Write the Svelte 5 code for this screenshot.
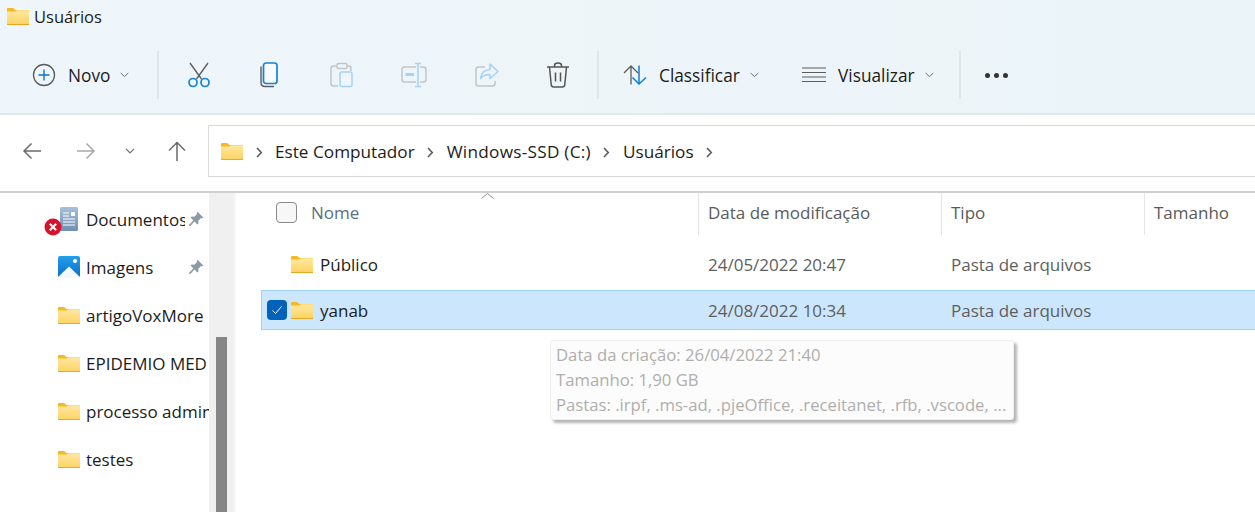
<script>
  const sidebar = [
    { name: 'Documentos', icon: 'doc', pin: true },
    { name: 'Imagens', icon: 'img', pin: true },
    { name: 'artigoVoxMore', icon: 'folder' },
    { name: 'EPIDEMIO MED', icon: 'folder' },
    { name: 'processo admin', icon: 'folder' },
    { name: 'testes', icon: 'folder' }
  ]
  const files = [
    { name: 'Público', date: '24/05/2022 20:47', type: 'Pasta de arquivos' },
    { name: 'yanab', date: '24/08/2022 10:34', type: 'Pasta de arquivos', selected: true }
  ]
  const crumbs = ['Este Computador', 'Windows-SSD (C:)', 'Usuários']
</script>

{#snippet folder(w = 22, h = 17)}
  <svg class="folder" width={w} height={h} viewBox="0 0 22 17">
    <defs>
      <linearGradient id="fg" x1="0" y1="0" x2="0" y2="1">
        <stop offset="0" stop-color="#ffe9a0" />
        <stop offset="1" stop-color="#fdd262" />
      </linearGradient>
    </defs>
    <path d="M0 1.2C0 .5.5 0 1.2 0h5l2.2 2H22v3H0z" fill="#f9b81f" />
    <path d="M0 3.4h8.5L10 2.2h12V17H0z" fill="url(#fg)" />
    <rect x="0" y="16" width="22" height="1" fill="#e9a824" />
  </svg>
{/snippet}

{#snippet pin()}
  <svg class="pin" width="16" height="16" viewBox="0 0 16 16">
    <path d="M9.6 .8l5.6 5.6-1.2 1-1-.4-2.7 2.7.2 2.6-1.1 1.1-2.8-2.8L2 15.2 .8 14l4.600-4.600-2.800-2.800 1.100-1.100 2.600.2 2.700-2.700-.4-1z" fill="#8d9aa5" />
  </svg>
{/snippet}

{#snippet caret()}
  <svg class="caret" width="9" height="6" viewBox="0 0 9 6"><path d="M.7 1l3.800 3.600L8.300 1" fill="none" stroke="#6d6d6d" stroke-width="1" /></svg>
{/snippet}

<div class="window">
  <header class="ribbon">
    <div class="title">
      {@render folder()}
      <span>Usuários</span>
    </div>
    <div class="tools">
      <button class="tool novo">
        <svg width="24" height="24" viewBox="0 0 24 24">
          <circle cx="12" cy="12" r="10.500" fill="none" stroke="#5a5a5a" stroke-width="1.300" />
          <path d="M12 6.500v11M6.500 12h11" stroke="#0a74cf" stroke-width="1.400" />
        </svg>
        <span>Novo</span>
        {@render caret()}
      </button>
      <i class="sep"></i>
      <div class="icons">
        <svg width="24" height="26" viewBox="0 0 24 26">
          <path d="M3 1l11.500 16M21 1L9.500 17" stroke="#5c5c5c" stroke-width="1.300" fill="none" />
          <circle cx="6" cy="20.500" r="4" fill="none" stroke="#1283d8" stroke-width="1.700" />
          <circle cx="18" cy="20.500" r="4" fill="none" stroke="#1283d8" stroke-width="1.700" />
        </svg>
        <svg width="24" height="26" viewBox="0 0 24 26">
          <path d="M3 4.500v16c0 2.500 1.500 4 4 4h9" fill="none" stroke="#5c5c5c" stroke-width="1.400" />
          <rect x="5.500" y="1" width="13.500" height="20.500" rx="2.500" fill="#f7f9fb" stroke="#1283d8" stroke-width="1.700" />
        </svg>
        <svg width="24" height="26" viewBox="0 0 24 26">
          <path d="M7 4H3.500C2 4 1 5 1 6.500v15C1 23 2 24 3.500 24H8" fill="none" stroke="#c2c5c7" stroke-width="1.500" />
          <path d="M17 4h1.500C20 4 21 5 21 6.500V9" fill="none" stroke="#c2c5c7" stroke-width="1.500" />
          <rect x="7" y="1.500" width="10" height="5" rx="1.500" fill="none" stroke="#c2c5c7" stroke-width="1.500" />
          <rect x="10" y="10" width="12" height="14.500" rx="2" fill="#eef5fb" stroke="#a5d2f4" stroke-width="1.500" />
        </svg>
        <svg width="26" height="26" viewBox="0 0 26 26">
          <path d="M15 5H3.500C2 5 1 6 1 7.500v10C1 19 2 20 3.500 20H15M19 5h3c1.500 0 3 1 3 2.500v10c0 1.500-1.500 2.500-3 2.500h-3" fill="none" stroke="#c2c5c7" stroke-width="1.500" />
          <path d="M17 2v22M14 1.500h6M14 24.500h6" stroke="#a5d2f4" stroke-width="1.500" fill="none" />
          <path d="M4.500 12.500h8.500" stroke="#a5d2f4" stroke-width="3" />
        </svg>
        <svg width="24" height="24" viewBox="0 0 24 24">
          <path d="M10 4H3.500C2 4 1 5 1 6.500v14C1 22 2 23 3.500 23h14c1.500 0 2.500-1 2.500-2.500V18" fill="none" stroke="#c2c5c7" stroke-width="1.500" />
          <path d="M15 1l8 7.500-8 7v-4c-4.500 0-7 1-9.500 4 .5-5 3.500-8.500 9.500-9z" fill="none" stroke="#a5d2f4" stroke-width="1.500" stroke-linejoin="round" />
        </svg>
        <svg width="24" height="26" viewBox="0 0 24 26">
          <path d="M1 5h22M8.500 5V3.500C8.500 2 10 1 12 1s3.500 1 3.500 2.500V5" fill="none" stroke="#555" stroke-width="1.500" />
          <path d="M3.500 5l1.700 17.500c.1 1.500 1.200 2.500 2.600 2.500h8.400c1.400 0 2.500-1 2.600-2.500L20.500 5" fill="none" stroke="#555" stroke-width="1.500" />
          <path d="M9.500 10.500v9M14.500 10.500v9" stroke="#555" stroke-width="1.500" />
        </svg>
      </div>
      <i class="sep"></i>
      <button class="tool sort">
        <svg width="24" height="20" viewBox="0 0 24 20">
          <path d="M8 19.500V1M1 8l7-7 7 7" fill="none" stroke="#5c5c5c" stroke-width="1.300" />
          <path d="M16 .5V19M9.500 12.500L16 19l7-6.500" fill="none" stroke="#0f7fd6" stroke-width="1.500" />
        </svg>
        <span>Classificar</span>
        {@render caret()}
      </button>
      <button class="tool view">
        <svg width="24" height="16" viewBox="0 0 24 16">
          <path d="M0 1h24M0 5.500h24M0 10h24M0 14.500h24" stroke="#5c5c5c" stroke-width="1.200" />
        </svg>
        <span>Visualizar</span>
        {@render caret()}
      </button>
      <i class="sep"></i>
      <div class="dots"><b></b><b></b><b></b></div>
    </div>
  </header>

  <nav class="navbar">
    <div class="arrows">
      <svg width="20" height="18" viewBox="0 0 20 18"><path d="M19 9H2M9.500 1.500L2 9l7.500 7.500" fill="none" stroke="#6a6a6a" stroke-width="1.500" /></svg>
      <svg width="20" height="18" viewBox="0 0 20 18"><path d="M1 9h17M10.500 1.500L18 9l-7.500 7.500" fill="none" stroke="#a9a9a9" stroke-width="1.500" /></svg>
      <svg width="10" height="6" viewBox="0 0 10 6"><path d="M1 .8l4 4 4-4" fill="none" stroke="#707070" stroke-width="1.200" /></svg>
      <svg width="20" height="20" viewBox="0 0 20 20"><path d="M10 20V2M2 9.500L10 1.500l8 8" fill="none" stroke="#6a6a6a" stroke-width="1.500" /></svg>
    </div>
    <div class="address">
      {@render folder()}
      {#each crumbs as c}
        <svg class="chev" width="7" height="11" viewBox="0 0 7 11"><path d="M1 1l4.300 4.500L1 10" fill="none" stroke="#555" stroke-width="1.500" /></svg>
        <span>{c}</span>
      {/each}
      <svg class="chev" width="7" height="11" viewBox="0 0 7 11"><path d="M1 1l4.300 4.500L1 10" fill="none" stroke="#555" stroke-width="1.500" /></svg>
    </div>
  </nav>

  <main class="body">
    <aside class="side">
      <ul>
        {#each sidebar as it}
          <li>
            <span class="ico">
              {#if it.icon === 'doc'}
                <svg class="doc" width="18" height="24" viewBox="0 0 18 24">
                  <defs>
                    <linearGradient id="dg" x1="0" y1="0" x2="0" y2="1">
                      <stop offset="0" stop-color="#a8bfd8" />
                      <stop offset="1" stop-color="#6f8fb2" />
                    </linearGradient>
                  </defs>
                  <rect width="18" height="24" rx="1.500" fill="url(#dg)" />
                  <path d="M3 6h6M3 9h6M3 12h12M3 15h12M3 18h12" stroke="#fff" stroke-width="1" />
                  <rect x="11" y="5" width="4" height="4" fill="#fff" />
                </svg>
                <span class="err">
                  <svg width="18" height="18" viewBox="0 0 18 18">
                    <circle cx="9" cy="9" r="8.500" fill="#d9122c" />
                    <path d="M5.800 5.800l6.400 6.400M12.200 5.800l-6.400 6.400" stroke="#fff" stroke-width="2" />
                  </svg>
                </span>
              {:else if it.icon === 'img'}
                <svg width="22" height="22" viewBox="0 0 22 22">
                  <defs>
                    <linearGradient id="ig" x1="0" y1="0" x2="0" y2="1">
                      <stop offset="0" stop-color="#22a0ec" />
                      <stop offset="1" stop-color="#0a6cc4" />
                    </linearGradient>
                  </defs>
                  <rect width="22" height="22" rx="2" fill="url(#ig)" />
                  <circle cx="17" cy="5" r="2" fill="#fff" />
                  <path d="M0 21L11 10.500 22 21v1H0z" fill="#f4f8fc" />
                </svg>
              {:else}
                {@render folder()}
              {/if}
            </span>
            <span class="label" class:short={it.pin}>{it.name}</span>
            {#if it.pin}{@render pin()}{/if}
          </li>
        {/each}
      </ul>
    </aside>
    <div class="track"><div class="thumb"></div></div>
    <section class="list">
      <svg class="sortmark" width="13" height="6" viewBox="0 0 13 6"><path d="M.5 5.500l6-5 6 5" fill="none" stroke="#8c8c8c" /></svg>
      <div class="head">
        <div class="c-name">
          <span class="check"></span>
          <span>Nome</span>
        </div>
        <div class="c-date">Data de modificação</div>
        <div class="c-type">Tipo</div>
        <div class="c-size">Tamanho</div>
      </div>
      {#each files as f}
        <div class="row" class:selected={f.selected}>
          <div class="c-name">
            {#if f.selected}
              <span class="tick">
                <svg width="12" height="10" viewBox="0 0 12 10"><path d="M1.500 5.500l3 3 6-7" fill="none" stroke="#fff" stroke-width="1" /></svg>
              </span>
            {/if}
            {@render folder()}
            <span class="fname">{f.name}</span>
          </div>
          <div class="c-date muted">{f.date}</div>
          <div class="c-type muted">{f.type}</div>
        </div>
      {/each}
      <div class="tooltip">
        <div>Data da criação: 26/04/2022 21:40</div>
        <div>Tamanho: 1,90 GB</div>
        <div>Pastas: .irpf, .ms-ad, .pjeOffice, .receitanet, .rfb, .vscode, ...</div>
      </div>
    </section>
  </main>
</div>

<style>
  :global(body) {
    margin: 0;
    background: #fff;
  }
  .window {
    width: 1255px;
    height: 512px;
    overflow: hidden;
    font-family: "Open Sans", "Noto Sans", sans-serif;
    font-size: 17px;
    color: #1c1c1c;
    display: flex;
    flex-direction: column;
  }
  .ribbon {
    height: 113px;
    flex: none;
    background: linear-gradient(90deg, #eff6fb, #ebf4f8);
    border-bottom: 2px solid #e0e8ec;
  }
  .title {
    display: flex;
    align-items: center;
    gap: 5px;
    height: 18px;
    padding: 7px 0 0 7px;
    font-size: 16.500px;
  }
  .tools {
    display: flex;
    align-items: center;
    height: 48px;
    margin-top: 26px;
  }
  .tool {
    display: flex;
    align-items: center;
    border: 0;
    background: none;
    padding: 0;
    font: inherit;
    color: inherit;
    flex: none;
    box-sizing: border-box;
    gap: 12px;
  }
  .novo {
    width: 157px;
    padding-left: 32px;
  }
  .novo span { font-size: 17.800px; }
  .sep {
    width: 2px;
    height: 48px;
    background: #dfe5e9;
    flex: none;
  }
  .icons {
    width: 438px;
    flex: none;
    box-sizing: border-box;
    padding: 0 27px 0 28px;
    display: flex;
    align-items: center;
    justify-content: space-between;
  }
  .sort {
    width: 178px;
    padding-left: 24px;
  }
  .view {
    width: 182px;
    padding-left: 25px;
  }
  .tool span { font-size: 17.300px; }
  .tool .caret { margin-left: -2px; }
  .dots {
    display: flex;
    gap: 4px;
    margin-left: 24px;
  }
  .dots b {
    width: 5px;
    height: 5px;
    border-radius: 50%;
    background: #333;
  }
  .navbar {
    height: 78px;
    flex: none;
    box-sizing: border-box;
    border-bottom: 2px solid #cfcfcf;
    padding: 10px 0 0 22px;
    display: flex;
    align-items: flex-start;
  }
  .arrows {
    width: 186px;
    height: 52px;
    display: flex;
    align-items: center;
    gap: 34px;
  }
  .arrows svg:nth-child(3) { margin: 0 0 0 -5px; }
  .arrows svg:nth-child(4) { margin-left: -2px; }
  .address {
    flex: 1;
    height: 52px;
    box-sizing: border-box;
    border: 1px solid #d9d9d9;
    border-right: 0;
    padding: 1px 0 0 12px;
    display: flex;
    align-items: center;
    gap: 12.500px;
    font-size: 17.200px;
  }
  .address span:nth-of-type(2) { letter-spacing: .27px; }
  .chev { margin-top: 2px; }
  .body {
    flex: 1;
    display: flex;
    min-height: 0;
  }
  .side {
    width: 209px;
    flex: none;
    overflow: hidden;
  }
  ul {
    list-style: none;
    margin: 0;
    padding: 2px 0 0 58px;
  }
  li {
    height: 48px;
    display: flex;
    align-items: center;
    white-space: nowrap;
    font-size: 17px;
  }
  .ico {
    width: 28px;
    display: flex;
    position: relative;
    flex: none;
  }
  .ico :global(svg) { display: block; }
  .doc { margin-left: 2px; }
  .err {
    position: absolute;
    left: -14px;
    top: 11px;
  }
  .label.short {
    width: 99px;
    overflow: hidden;
  }
  .pin { flex: none; margin: -1px 0 0 3px; }
  .track {
    width: 25px;
    flex: none;
    background: #f0f0f0;
    border-right: 2px solid #f7f7f7;
    overflow: hidden;
  }
  .thumb {
    width: 11px;
    height: 200px;
    margin: 144px 0 0 7px;
    background: #868686;
  }
  .list {
    flex: 1;
    position: relative;
    padding-left: 25px;
    font-size: 17px;
  }
  .sortmark {
    position: absolute;
    left: 245px;
    top: 0;
  }
  .head {
    display: flex;
    height: 42px;
    color: #5a5a5a;
  }
  .head > div {
    display: flex;
    align-items: center;
    padding-bottom: 4px;
    box-sizing: border-box;
  }
  .head .c-name {
    padding-left: 15px;
    gap: 14px;
    color: #5b6f85;
    border-right: 1px solid #e5e5e5;
  }
  .head .c-date, .head .c-type { border-right: 1px solid #e5e5e5; }
  .head .c-size { padding-left: 9px; }
  .check {
    width: 19px;
    height: 19px;
    border: 1px solid #8a8a8a;
    border-radius: 4px;
    background: #f7f7f7;
  }
  .c-name {
    width: 438px;
    flex: none;
    display: flex;
    align-items: center;
    box-sizing: border-box;
  }
  .c-date {
    width: 243px;
    flex: none;
    padding-left: 9px;
    box-sizing: border-box;
  }
  .c-type {
    width: 203px;
    flex: none;
    padding-left: 9px;
    box-sizing: border-box;
  }
  .row {
    height: 40px;
    display: flex;
    align-items: center;
    margin-top: 9px;
    box-sizing: border-box;
  }
  .row:not(.selected) .c-name { padding-left: 30px; gap: 7px; }
  .row.selected {
    background: #cce6fd;
    border: 1px solid #9fd0f7;
    border-right: 0;
    margin-top: 6px;
  }
  .row.selected .c-name { padding-left: 5px; width: 437px; }
  .row.selected .fname { margin-left: 7px; }
  .tick {
    width: 20px;
    height: 20px;
    border-radius: 4px;
    background: #0062bb;
    display: flex;
    align-items: center;
    justify-content: center;
    margin-right: 4px;
  }
  .muted { color: #5e5e5e; }
  .tooltip {
    position: absolute;
    left: 314px;
    top: 147px;
    width: 464px;
    height: 80px;
    box-sizing: border-box;
    padding: 1px 5px;
    background: #fcfcfc;
    border: 1px solid #eee;
    border-radius: 3px;
    box-shadow: 3px 3px 3px #b5b5b5;
    color: #b0aeac;
    font-size: 16.700px;
    line-height: 25px;
    white-space: nowrap;
  }
</style>
